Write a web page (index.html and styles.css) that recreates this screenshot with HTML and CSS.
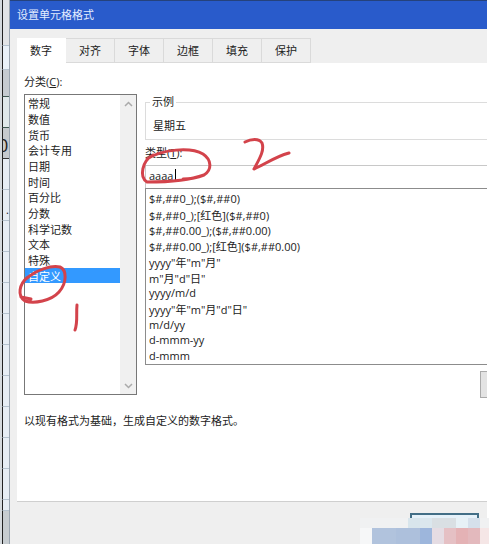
FILE: index.html
```html
<!DOCTYPE html>
<html lang="zh-CN">
<head>
  <meta charset="UTF-8">
  <meta name="viewport" content="width=device-width, initial-scale=1.0">
  <title>设置单元格格式</title>
  <link rel="stylesheet" href="styles.css">
</head>
<body>
  <div class="sheet">
    <div class="cell cell-head"></div>
    <div class="cell cell-blue"></div>
    <div class="cell cell-grey"></div>
    <div class="cell cell-mint"></div>
    <div class="cell cell-value">0</div>
    <div class="cell"></div>
    <div class="cell cell-dot">.</div>
    <div class="cell"></div>
    <div class="cell"></div>
    <div class="cell"></div>
    <div class="cell"></div>
    <div class="cell"></div>
    <div class="cell"></div>
    <div class="cell"></div>
    <div class="cell"></div>
    <div class="cell"></div>
    <div class="cell cell-thin"></div>
    <div class="cell cell-foot"></div>
  </div>

  <main class="dialog">
    <h1 class="title">设置单元格格式</h1>
    <nav class="tabs">
      <button class="tab active" type="button">数字</button>
      <button class="tab" type="button">对齐</button>
      <button class="tab" type="button">字体</button>
      <button class="tab" type="button">边框</button>
      <button class="tab" type="button">填充</button>
      <button class="tab" type="button">保护</button>
    </nav>

    <section class="panel">
      <label class="category-label" for="category">分类(<u>C</u>):</label>
      <div class="columns">
        <div class="category">
          <select class="list" id="category" size="12">
            <option>常规</option>
            <option>数值</option>
            <option>货币</option>
            <option>会计专用</option>
            <option>日期</option>
            <option>时间</option>
            <option>百分比</option>
            <option>分数</option>
            <option>科学记数</option>
            <option>文本</option>
            <option>特殊</option>
            <option selected>自定义</option>
          </select>
          <div class="scrollbar">
            <button class="arrow" type="button" aria-label="向上">
              <svg width="9" height="6" viewBox="0 0 9 6"><path d="M1 5 4.500 1.500 8 5"/></svg>
            </button>
            <button class="arrow" type="button" aria-label="向下">
              <svg width="9" height="6" viewBox="0 0 9 6"><path d="M1 1 4.500 4.500 8 1"/></svg>
            </button>
          </div>
        </div>

        <div class="format">
          <fieldset class="sample">
            <legend>示例</legend>
            <output>星期五</output>
          </fieldset>
          <label class="type-label" for="type">类型(<u>T</u>):</label>
          <div class="type-box">
            <input class="type" id="type" type="text" value="aaaa">
            <span class="caret"></span>
          </div>
          <select class="list codes" size="11" aria-label="类型">
            <option>$#,##0_);($#,##0)</option>
            <option>$#,##0_);[红色]($#,##0)</option>
            <option>$#,##0.00_);($#,##0.00)</option>
            <option>$#,##0.00_);[红色]($#,##0.00)</option>
            <option>yyyy"年"m"月"</option>
            <option>m"月"d"日"</option>
            <option>yyyy/m/d</option>
            <option>yyyy"年"m"月"d"日"</option>
            <option>m/d/yy</option>
            <option>d-mmm-yy</option>
            <option>d-mmm</option>
          </select>
          <button class="delete" type="button" aria-label="删除"></button>
        </div>
      </div>
      <p class="hint">以现有格式为基础，生成自定义的数字格式。</p>
    </section>

    <footer class="actions">
      <button class="ok" type="button" aria-label="确定"></button>
    </footer>
  </main>

  <!-- red pen marks -->
  <svg class="marks" width="489" height="544" viewBox="0 0 489 544">
    <path d="M26 279C36 270 51 265 60 267C67 270 67 283 59 292C51 301 34 304 25 301C17 296 19 284 28 277M21 297L31 299"/>
    <path d="M77 305C76 314 78 322 75 330"/>
    <path d="M147 159C162 149 191 147 203 154C212 160 212 170 204 175C188 181 164 182 147 182C139 177 142 161 153 155M183 179C190 179 196 178 201 176"/>
    <path d="M245 142C251 139 259 138 262 143C265 151 258 161 254 169C264 165 274 157 289 153"/>
  </svg>

  <!-- mosaic over the corner -->
  <svg class="mosaic" width="129" height="26" viewBox="0 0 129 26" shape-rendering="crispEdges">
    <rect width="129" height="10" fill="#f0f1f2"/>
    <rect x="48" width="12" height="10" fill="#d8e5ec"/>
    <rect x="60" width="12" height="10" fill="#dbe7ee"/>
    <rect x="72" width="24" height="10" fill="#d9dfe3"/>
    <rect x="96" width="12" height="10" fill="#e7f1f6"/>
    <rect x="108" width="12" height="10" fill="#d5e0eb"/>
    <rect y="10" width="12" height="16" fill="#f6f7f8"/>
    <rect x="12" y="10" width="24" height="16" fill="#b1c3dd"/>
    <rect x="36" y="10" width="24" height="16" fill="#adc0dc"/>
    <rect x="60" y="10" width="12" height="16" fill="#9db6dc"/>
    <rect x="72" y="10" width="12" height="16" fill="#e5dce3"/>
    <rect x="84" y="10" width="12" height="16" fill="#e5c0c4"/>
    <rect x="96" y="10" width="12" height="16" fill="#e4b2b5"/>
    <rect x="108" y="10" width="12" height="16" fill="#e3b9bd"/>
    <rect x="120" y="10" width="9" height="16" fill="#f5e6e6"/>
  </svg>
</body>
</html>
```
FILE: styles.css
```css
* {
  box-sizing: border-box;
}
body {
  position: relative;
  display: flex;
  min-height: 100vh;
  margin: 0;
  padding-right: 2px;
  overflow: hidden;
  background: #fff;
  color: #222;
  font-family: "Open Sans", "Noto Sans CJK SC", sans-serif;
  font-size: 11px;
  line-height: 16px;
}
button, input, select {
  margin: 0;
  padding: 0;
  border: 0;
  border-radius: 0;
  background: none;
  color: inherit;
  font: inherit;
  outline: none;
}

/* worksheet behind the dialog */
.sheet {
  display: flex;
  flex: none;
  flex-direction: column;
  width: 10px;
  padding-left: 2px;
  border-right: 1px solid #9aa5b0;
  background: #d5dade;
}
.cell {
  flex: none;
  height: 31px;
  overflow: hidden;
  border-left: 1px solid #222;
  border-bottom: 1px solid #b5c3cf;
  background: #e6edf4;
}
.cell-head {
  height: 46px;
  background: #e2e4e6;
}
.cell-blue {
  height: 24px;
  background: #e9f1f8;
}
.cell-grey {
  height: 27px;
  border-bottom-color: #3f5953;
  background: #c5cbd0;
}
.cell-mint {
  border-bottom-color: #3f5953;
  background: #dfe8ea;
}
.cell-value {
  border-bottom-color: #333;
  background: #c5cace;
  font-size: 18px;
  line-height: 34px;
  text-indent: -5px;
}
.cell-dot {
  line-height: 40px;
  text-indent: 3px;
}
.cell-thin {
  height: 11px;
}
.cell-foot {
  flex: 1;
  border-bottom: 0;
  background: #c7cdd1;
}

.dialog {
  display: flex;
  flex: 1;
  flex-direction: column;
  min-width: 0;
  border-top: 1px solid #25427c;
  background: #efefef;
}
.title {
  height: 28px;
  margin: 0;
  padding-left: 7px;
  background: #295bcb;
  color: #e4edff;
  font-size: 11px;
  font-weight: normal;
  line-height: 28px;
}
.tabs {
  display: flex;
  padding: 9px 0 0 7px;
}
.tab {
  width: 49px;
  height: 25px;
  border: 1px solid #dadada;
  border-width: 1px 1px 1px 0;
}
.tab.active {
  border-color: #fff;
  background: #fff;
}
.panel {
  flex: 1;
  margin: 0 0 0 7px;
  padding: 11px 0 0 7px;
  border-bottom: 1px solid #cfcfcf;
  background: #fff;
}
.category-label {
  display: block;
  height: 20px;
}
.columns {
  display: flex;
  gap: 8px;
}
.category {
  display: flex;
  width: 113px;
  height: 301px;
  border: 1px solid #777;
}
.list {
  flex: 1;
  min-width: 0;
  overflow: hidden;
  appearance: none;
}
.list option {
  height: 16px;
  min-height: 0;
  padding: 0 3px;
  line-height: 16px;
}
.list option:nth-child(3n) {
  height: 15px;
}
.list option:checked {
  background: #3399ff linear-gradient(#3399ff, #3399ff);
  color: #fff;
  -webkit-text-fill-color: #fff;
}
.scrollbar {
  display: flex;
  flex-direction: column;
  justify-content: space-between;
  width: 16px;
  background: #f0f0f0;
}
.arrow {
  height: 17px;
  line-height: 0;
}
.arrow path {
  fill: none;
  stroke: #aaa;
  stroke-width: 1.5;
}

.format {
  display: flex;
  flex: 1;
  flex-direction: column;
  min-width: 0;
}
.sample {
  height: 46px;
  margin: 0;
  padding: 8px 7px 0;
  border: 1px solid #dcdcdc;
  border-right: 0;
}
.sample legend {
  margin-left: -3px;
  padding: 0 2px;
}
.sample output {
  display: block;
}
.type-label {
  height: 25px;
  padding-top: 5px;
}
.type-box {
  position: relative;
  height: 23px;
  border: 1px solid #c8c8c8;
  border-width: 1px 0 0 1px;
}
.type {
  display: block;
  width: 100%;
  height: 19px;
  padding-left: 3px;
}
.caret {
  position: absolute;
  top: 3px;
  left: 29px;
  width: 1px;
  height: 13px;
  background: #000;
}
.codes {
  flex: none;
  height: 177px;
  padding-top: 2px;
  border: 1px solid #8c8c8c;
  border-right: 0;
}
.delete {
  align-self: flex-end;
  width: 7px;
  height: 27px;
  margin-top: 6px;
  border: 1px solid #aaa;
  border-right: 0;
  background: #e3e3e3;
}
.hint {
  margin: 15px 0 0;
}
.actions {
  display: flex;
  justify-content: flex-end;
  height: 42px;
  padding: 11px 8px 0 0;
}
.ok {
  width: 69px;
  height: 24px;
  border: 2px solid #426e86;
  background: #e5f1f9;
}

.marks {
  position: absolute;
  top: 0;
  left: 0;
  fill: none;
  stroke: #d3434b;
  stroke-width: 3;
  stroke-linecap: round;
  stroke-linejoin: round;
  pointer-events: none;
}
.mosaic {
  position: absolute;
  right: 0;
  bottom: 0;
}
```
